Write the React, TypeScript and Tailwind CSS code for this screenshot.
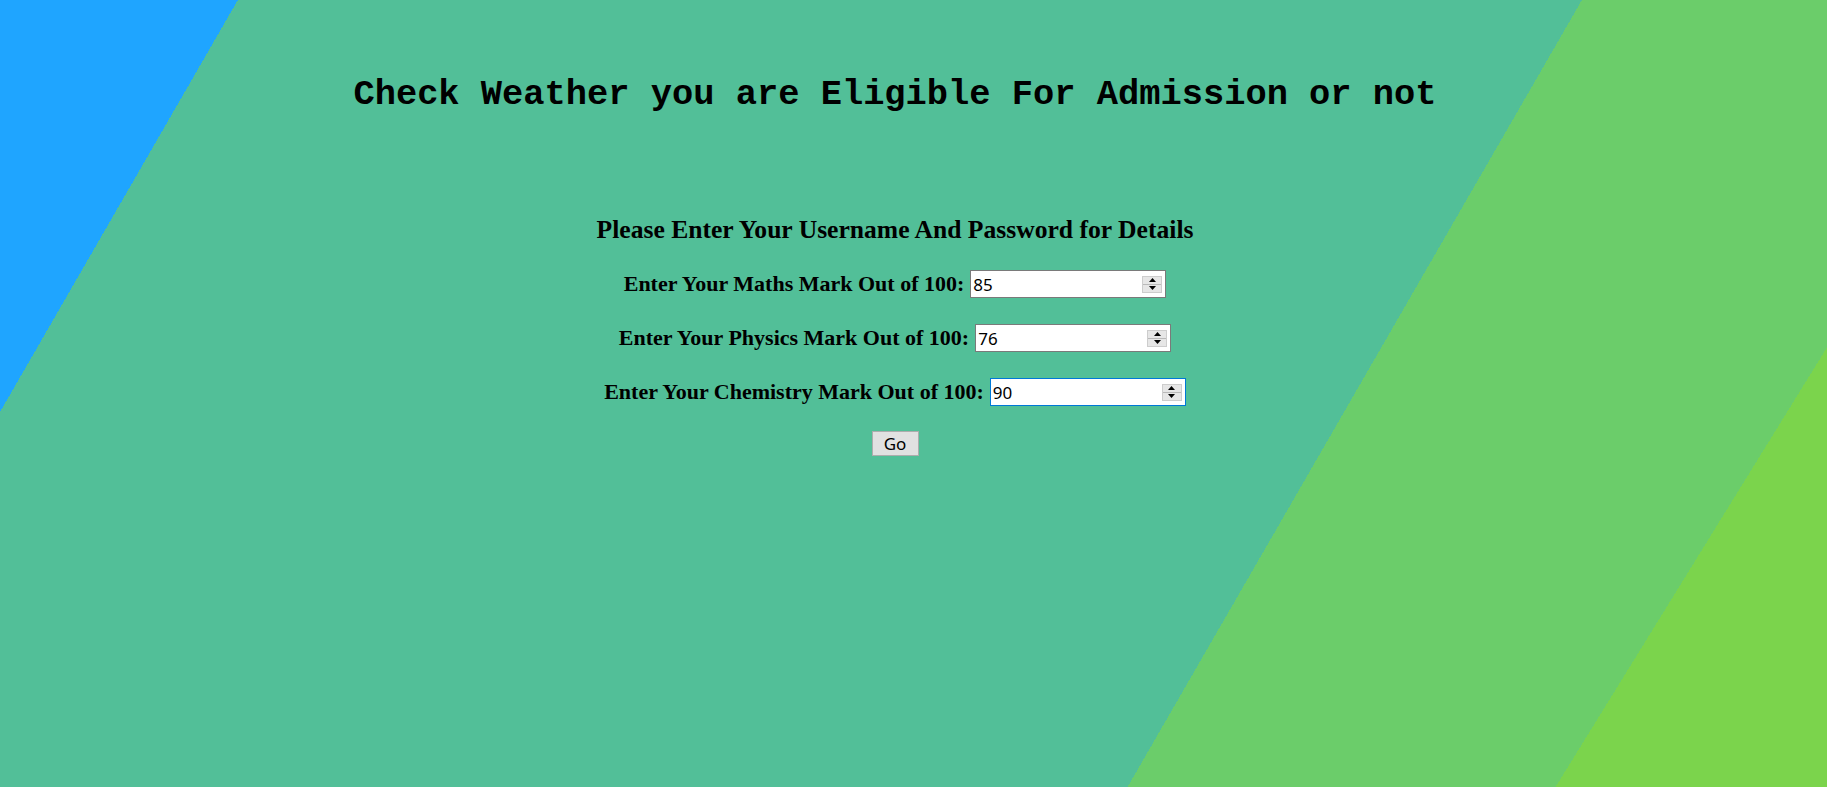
import React from "react";

const marks = [
  { label: "Enter Your Maths Mark Out of 100:", value: "85", focused: false },
  { label: "Enter Your Physics Mark Out of 100:", value: "76", focused: false },
  { label: "Enter Your Chemistry Mark Out of 100:", value: "90", focused: true },
];

function Spinner() {
  return (
    <div className="flex h-[17px] w-[20px] shrink-0 flex-col border border-[#cdcdcd] bg-[#e6e6e6]">
      <div className="flex flex-1 items-center justify-center border-b border-[#b9b9b9]">
        <svg width="7" height="4" viewBox="0 0 7 4">
          <path d="M3.5 0L7 4H0z" fill="#000" />
        </svg>
      </div>
      <div className="flex flex-1 items-center justify-center">
        <svg width="7" height="4" viewBox="0 0 7 4">
          <path d="M0 0h7L3.5 4z" fill="#000" />
        </svg>
      </div>
    </div>
  );
}

function MarkRow({ label, value, focused }: { label: string; value: string; focused: boolean }) {
  return (
    <div className="flex items-center justify-center gap-[6px]">
      <label className="font-['Liberation_Serif',serif] text-[22px] font-bold leading-[28px] text-black">
        {label}
      </label>
      <div
        className={
          focused
            ? "flex h-[28px] w-[196px] items-center border border-[#0078d7] bg-white pr-[3px]"
            : "flex h-[28px] w-[196px] items-center border border-[#7a7a7a] bg-white pr-[3px]"
        }
      >
        <input
          type="text"
          readOnly
          value={value}
          className="h-full min-w-0 flex-1 bg-transparent pl-[2px] font-['Noto_Sans',sans-serif] text-[17px] text-black outline-none"
        />
        <Spinner />
      </div>
    </div>
  );
}

export default function App() {
  return (
    <div className="h-screen w-full overflow-hidden bg-[linear-gradient(121.7deg,transparent_1737px,#7bd44c_1737px),linear-gradient(120deg,#1fa5ff_206px,#52bf98_206px,#52bf98_1370px,#6bcd6a_1370px)] pr-[37px]">
      <h1 className="pt-[75px] text-center font-['Liberation_Mono',monospace] text-[35.4px] font-bold leading-[40px] text-black">
        Check Weather you are Eligible For Admission or not
      </h1>
      <h3 className="mt-[101px] text-center font-['Liberation_Serif',serif] text-[25.6px] font-bold leading-[28px] text-black">
        Please Enter Your Username And Password for Details
      </h3>
      <div className="mt-[26px] flex flex-col gap-[26px]">
        {marks.map((m) => (
          <MarkRow key={m.label} {...m} />
        ))}
      </div>
      <div className="mt-[25px] flex justify-center">
        <button className="h-[25px] w-[47px] border border-[#adadad] bg-[#e1e1e1] font-['Noto_Sans',sans-serif] text-[17px] leading-none text-black">
          Go
        </button>
      </div>
    </div>
  );
}
